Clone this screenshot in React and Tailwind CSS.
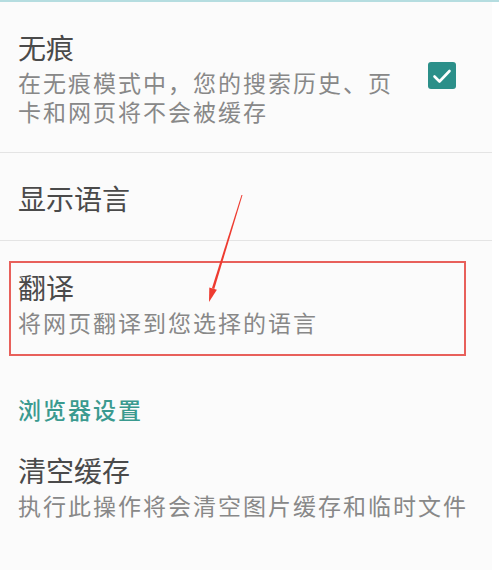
import React from "react";

const font = { fontFamily: '"Noto Sans CJK SC", "Noto Sans", sans-serif' };

export default function App() {
  return (
    <div className="relative w-[499px] h-[570px] overflow-hidden bg-white flex" style={font}>
      <div className="w-[492px] bg-[#fbfbfb] border-t-2 border-[#b5dde0] flex flex-col">
        {/* 无痕 */}
        <div className="flex items-center pl-[18px] pt-[29px] pb-[26px]">
          <div className="flex flex-col flex-1">
            <div className="text-[28px] leading-[32px] text-[#4a4a4a]">无痕</div>
            <div className="mt-[5px] text-[23px] leading-[29px] text-[#888888] tracking-[2px] w-[388px]">
              在无痕模式中，您的搜索历史、页卡和网页将不会被缓存
            </div>
          </div>
          <div className="mr-[36px] mb-[6px] w-[28px] h-[27px] rounded-[3px] bg-[#2b8f89] flex items-center justify-center">
            <svg width="24" height="24" viewBox="0 0 24 24" fill="none" stroke="white" strokeWidth="2.6" strokeLinecap="round" strokeLinejoin="round">
              <path d="M4.5 12.5l5 5L19.5 7" />
            </svg>
          </div>
        </div>
        <div className="h-px bg-[#e4e4e4]" />
        {/* 显示语言 */}
        <div className="pl-[18px] pt-[29px] pb-[26px]">
          <div className="text-[28px] leading-[32px] text-[#4a4a4a]">显示语言</div>
        </div>
        <div className="h-px bg-[#e4e4e4]" />
        {/* 翻译 */}
        <div className="mt-[20px] ml-[9px] w-[457px] border-2 border-[#e8605b] pl-[7px] pt-[8px] pb-[17px]">
          <div className="text-[28px] leading-[32px] text-[#4a4a4a]">翻译</div>
          <div className="mt-[5px] text-[23px] leading-[29px] text-[#888888] tracking-[2px]">将网页翻译到您选择的语言</div>
        </div>
        {/* 浏览器设置 */}
        <div className="mt-[38px] pl-[18px] text-[23px] leading-[30px] font-medium text-[#3a9a8f] tracking-[2px]">浏览器设置</div>
        {/* 清空缓存 */}
        <div className="mt-[30px] pl-[18px]">
          <div className="text-[28px] leading-[32px] text-[#4a4a4a]">清空缓存</div>
          <div className="mt-[5px] text-[23px] leading-[29px] text-[#888888] tracking-[2px]">执行此操作将会清空图片缓存和临时文件</div>
        </div>
      </div>
      <div className="flex-1 bg-white border-t-2 border-[#b5dde0]" />
      {/* annotation arrow */}
      <svg className="absolute left-0 top-0 pointer-events-none" width="499" height="570">
        <polygon points="242.5,195.1 241.5,194.9 211.9,288.2 214.3,289.0" fill="#ee3b30" />
        <polygon points="216.9,289.8 209.3,287.4 209,302" fill="#ee3b30" />
      </svg>
    </div>
  );
}
